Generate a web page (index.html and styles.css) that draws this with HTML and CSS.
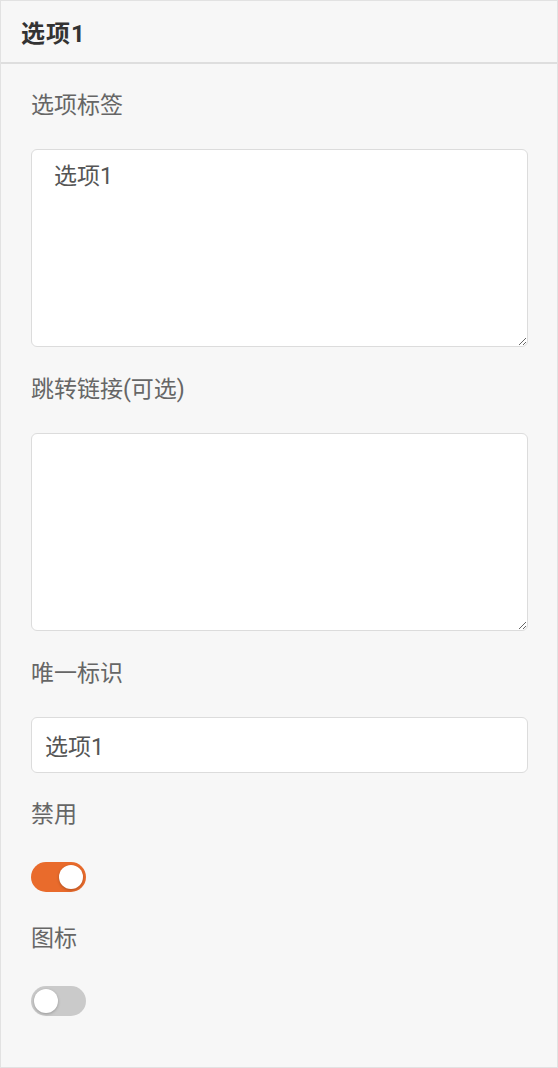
FILE: index.html
```html
<!DOCTYPE html>
<html lang="zh">
<head>
  <meta charset="UTF-8" />
  <meta name="viewport" content="width=device-width, initial-scale=1.0" />
  <title>选项1</title>
  <link rel="stylesheet" href="styles.css">
</head>
<body>
  <div class="panel">
    <div class="panel-head">选项1</div>

    <div class="panel-body">
      <div class="field">
        <div class="field-label">选项标签</div>
        <textarea class="field-area">选项1</textarea>
      </div>

      <div class="field">
        <div class="field-label">跳转链接(可选)</div>
        <textarea class="field-area"></textarea>
      </div>

      <div class="field field-short">
        <div class="field-label">唯一标识</div>
        <input class="field-input" type="text" value="选项1" />
      </div>

      <div class="field">
        <div class="field-label">禁用</div>
        <label class="switch">
          <input type="checkbox" checked />
          <span class="switch-track"></span>
        </label>
      </div>

      <div class="field">
        <div class="field-label">图标</div>
        <label class="switch">
          <input type="checkbox" />
          <span class="switch-track"></span>
        </label>
      </div>
    </div>
  </div>
</body>
</html>
```

FILE: styles.css
```css
:root {
  --bg: #f7f7f7;
  --line: #e2e2e2;
  --accent: #e96b2c;
  --label: #666;
}
* { box-sizing: border-box; }
html, body { margin: 0; height: 100%; }
body {
  font-family: Roboto, "Noto Sans CJK SC", sans-serif;
  background: var(--bg);
}
.panel {
  min-height: 100%;
  border: 1px solid var(--line);
  background: var(--bg);
}
.panel-head {
  height: 63px;
  padding: 0 20px;
  display: flex;
  align-items: center;
  font-size: 24px;
  font-weight: 700;
  letter-spacing: 1px;
  color: #333;
  border-bottom: 2px solid #dedede;
}
.panel-body {
  padding: 26px 29px 0 30px;
}
.field { margin-bottom: 27px; }
.field-short { margin-bottom: 26px; }
.field-label {
  font-size: 23px;
  line-height: 32px;
  color: var(--label);
  margin-bottom: 27px;
}
.field-area,
.field-input {
  display: block;
  width: 100%;
  font-family: inherit;
  font-size: 23px;
  color: #555;
  background: #fff;
  border: 1px solid #dcdcdc;
  border-radius: 6px;
  outline: none;
}
.field-area {
  height: 198px;
  padding: 12px 22px;
  line-height: 30px;
  resize: vertical;
}
.field-input {
  height: 56px;
  padding: 0 13px;
}

/* toggle */
.switch {
  display: inline-block;
  position: relative;
  width: 55px;
  height: 30px;
  margin-top: 4px;
  cursor: pointer;
}
.switch input { display: none; }
.switch-track {
  display: block;
  width: 100%;
  height: 100%;
  border-radius: 15px;
  background: #cacaca;
  position: relative;
  transition: background 0.2s;
}
.switch-track::after {
  content: "";
  position: absolute;
  top: 3px;
  left: 3px;
  width: 24px;
  height: 24px;
  border-radius: 50%;
  background: #fff;
  box-shadow: 0 1px 3px rgba(0,0,0,0.25);
  transition: left 0.2s;
}
.switch input:checked + .switch-track { background: var(--accent); }
.switch input:checked + .switch-track::after { left: 28px; }
```
